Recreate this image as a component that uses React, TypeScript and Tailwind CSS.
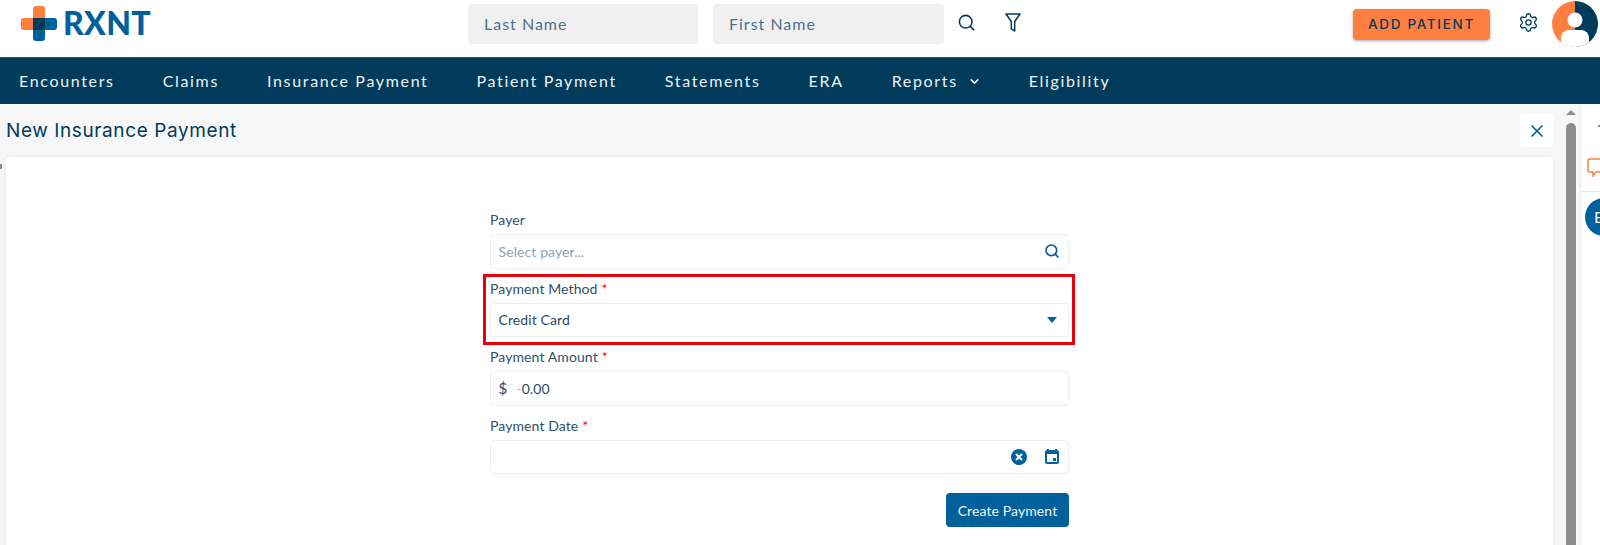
import { ChevronDown, Search, Settings, X } from 'lucide-react';

const navItems = ['Encounters', 'Claims', 'Insurance Payment', 'Patient Payment', 'Statements', 'ERA', 'Reports', 'Eligibility'];

function Logo() {
  return (
    <svg width="38" height="36" viewBox="0 0 38 36" className="shrink-0">
      <path d="M13 4a3 3 0 0 1 3-3h6a3 3 0 0 1 3 3v10H13z" fill="#ff7f41" />
      <path d="M4 13h21v12H4a3 3 0 0 1-3-3v-6a3 3 0 0 1 3-3z" fill="#ff7f41" />
      <path d="M13 13h21a3 3 0 0 1 3 3v6a3 3 0 0 1-3 3h-9v8a3 3 0 0 1-3 3h-6a3 3 0 0 1-3-3z" fill="#00609c" />
      <rect x="13" y="13" width="12" height="12" rx="1" fill="#003b5c" />
    </svg>
  );
}

function Avatar() {
  return (
    <svg width="46" height="46" viewBox="0 0 46 46" className="shrink-0">
      <defs>
        <clipPath id="avatar-clip">
          <circle cx="23" cy="23" r="23" />
        </clipPath>
      </defs>
      <g clipPath="url(#avatar-clip)">
        <rect width="23" height="46" fill="#ff7f41" />
        <rect x="23" width="23" height="46" fill="#003b5c" />
        <circle cx="23" cy="19" r="7.5" fill="#fff" />
        <path d="M9 37a8 8 0 0 1 8-8h12a8 8 0 0 1 8 8v10H9z" fill="#fff" />
      </g>
    </svg>
  );
}

function Label({ text, required }: { text: string; required?: boolean }) {
  return (
    <div className="h-[22px] text-[14px] leading-[16px] tracking-[0.1px] text-[#2f5069]">
      {text}
      {required && <span className="ml-1 text-[#f00]">*</span>}
    </div>
  );
}

function Box({ children }: { children?: React.ReactNode }) {
  return (
    <div className="flex h-[34.5px] items-center rounded border-[1.5px] border-[#eeeeee] bg-white pr-2 pl-[7.5px] text-[14px] tracking-[0.1px] text-[#1f4a66]">
      {children}
    </div>
  );
}

export default function App() {
  return (
    <div className="flex h-[545px] w-[1600px] flex-col overflow-hidden bg-white font-['Lato',sans-serif]">
      <header className="flex h-[57px] shrink-0 items-start">
        <div className="mt-[5px] ml-[20px] flex w-[448px] items-center gap-[5px]">
          <Logo />
          <span className="text-[32px] leading-[36px] font-black tracking-[0.3px] text-[#00609c]">RXNT</span>
        </div>
        <div className="mt-[4px] flex h-[40px] w-[230px] items-center rounded bg-[#f0f0f0] pl-4 text-[16px] tracking-[1px] text-[#4f7089]">
          Last Name
        </div>
        <div className="mt-[4px] ml-[15px] flex h-[40px] w-[231px] items-center rounded bg-[#f0f0f0] pl-4 text-[16px] tracking-[1px] text-[#4f7089]">
          First Name
        </div>
        <Search className="mt-[13px] ml-[13px] size-[19px] text-[#003b5c]" strokeWidth={2} />
        <svg width="16" height="19" viewBox="0 0 16 19" className="mt-[13px] ml-[29px] shrink-0">
          <path d="M1 1h14L9.7 8.5V18l-3.4-2.2V8.5z" fill="none" stroke="#003b5c" strokeWidth="1.5" strokeLinejoin="round" />
        </svg>
        <button className="mt-[9px] ml-[332px] h-[31px] w-[137px] rounded bg-[#ff7f41] font-['Inter',sans-serif] text-[13.5px] font-medium tracking-[1.7px] text-[#003b5c] shadow-[0_1px_3px_rgba(0,0,0,0.35)]">
          ADD PATIENT
        </button>
        <Settings className="mt-[12px] ml-[28px] size-[21px] text-[#003b5c]" strokeWidth={1.5} />
        <div className="mt-[1px] ml-[13px]">
          <Avatar />
        </div>
      </header>

      <nav className="flex h-[47px] shrink-0 items-center gap-[48px] border-t border-[#2a4f7a] bg-[#003b5c] pl-[19px] text-[16px] tracking-[1.66px] text-[#eef2f5]">
        {navItems.map((item) => (
          <span key={item} className="flex items-center">
            {item}
            {item === 'Reports' && <ChevronDown className="ml-[10px] size-[13px]" strokeWidth={3} />}
          </span>
        ))}
      </nav>

      <div className="flex min-h-0 flex-1">
        <main className="relative min-w-0 flex-1 bg-[#f7f7f7] pr-[10px] pl-[6px]">
          <span className="absolute top-[60px] left-0 h-[5px] w-[2px] bg-[#8c8c8c]" />
          <div className="flex h-[53px] items-start justify-between">
            <h1 className="mt-[15px] font-['Inter',sans-serif] text-[19px] leading-[24px] tracking-[0.6px] text-[#003b5c]">
              New Insurance Payment
            </h1>
            <div className="mt-[10px] flex size-[33px] items-center justify-center rounded bg-white">
              <X className="size-[20px] text-[#00609c]" strokeWidth={2} />
            </div>
          </div>
          <section className="h-[400px] rounded-t bg-white pt-[55px] shadow-[0_0_4px_rgba(0,0,0,0.08)]">
            <div className="mx-auto w-[579px]">
              <div className="mb-[12px]">
                <Label text="Payer" />
                <Box>
                  <span className="flex-1 text-[#8aa2b2]">Select payer...</span>
                  <Search className="size-[16px] text-[#00609c]" strokeWidth={2.5} />
                </Box>
              </div>

              <div className="relative mb-[12px]">
                <div className="absolute -top-[7px] -right-[6px] -bottom-[8px] -left-[7px] border-[3px] border-[#e8000d]" />
                <Label text="Payment Method" required />
                <Box>
                  <span className="flex-1">Credit Card</span>
                  <span className="mr-[3px] h-0 w-0 border-x-[5px] border-t-[6px] border-x-transparent border-t-[#00609c]" />
                </Box>
              </div>

              <div className="mb-[12px]">
                <Label text="Payment Amount" required />
                <Box>
                  <span className="mr-[9px] text-[15px]">$</span>
                  <span>
                    <span className="text-[#a9bbc7]">-</span>0.00
                  </span>
                </Box>
              </div>

              <div className="mb-[19px]">
                <Label text="Payment Date" required />
                <Box>
                  <span className="flex-1" />
                  <svg width="16" height="16" viewBox="0 0 16 16" className="mr-[18px]">
                    <circle cx="8" cy="8" r="8" fill="#00609c" />
                    <path d="M5 5l6 6M11 5l-6 6" stroke="#fff" strokeWidth="2" />
                  </svg>
                  <svg width="14" height="15" viewBox="0 0 14 15" className="mr-[1px]">
                    <path d="M3 0v2M11 0v2" stroke="#00609c" strokeWidth="2" />
                    <rect x="1" y="2" width="12" height="12" rx="1.5" fill="none" stroke="#00609c" strokeWidth="2" />
                    <rect x="1" y="2" width="12" height="3" fill="#00609c" />
                    <rect x="8" y="9" width="3" height="3" fill="#00609c" />
                  </svg>
                </Box>
              </div>

              <div className="flex justify-end">
                <button className="h-[34px] w-[123px] rounded bg-[#00609c] text-[14px] tracking-[0.1px] text-[#f2f6f9]">Create Payment</button>
              </div>
            </div>
          </section>
        </main>

        <div className="relative w-[17px] shrink-0 bg-[#f7f7f7]">
          <span className="absolute top-[6px] left-[3px] h-0 w-0 border-x-[5px] border-b-[5px] border-x-transparent border-b-[#8c8c8c]" />
          <span className="absolute top-[19px] bottom-0 left-[3px] w-[10px] rounded-t-[5px] bg-[#8c8c8c]" />
        </div>

        <aside className="relative w-[20px] shrink-0 overflow-hidden border-l border-[#ececec] bg-white">
          <span className="absolute top-[21px] right-0 h-[2px] w-[2px] bg-[#7f8f9a]" />
          <div className="flex h-[88px] items-end border-b border-[#e6e6e6] pb-[14px] pl-[6px]">
            <svg width="24" height="19" viewBox="0 0 24 19" className="shrink-0">
              <path d="M3 1h18a2 2 0 0 1 2 2v9a2 2 0 0 1-2 2H9l-3 4v-4H3a2 2 0 0 1-2-2V3a2 2 0 0 1 2-2z" fill="none" stroke="#ff7f41" strokeWidth="1.5" />
            </svg>
          </div>
          <div className="mt-[6px] ml-[4px] flex size-[38px] items-center rounded-full bg-[#00609c] pl-[9px] text-[16px] text-white">
            B
          </div>
        </aside>
      </div>
    </div>
  );
}
